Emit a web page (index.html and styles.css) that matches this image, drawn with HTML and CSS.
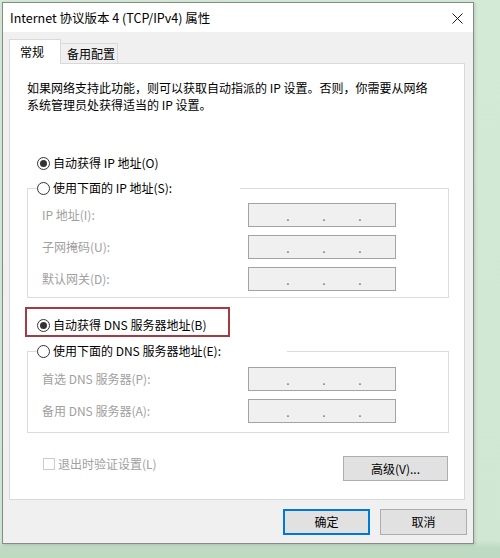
FILE: index.html
```html
<!DOCTYPE html>
<html lang="zh-CN">

<head>
    <meta charset="UTF-8">
    <meta name="viewport" content="width=device-width, initial-scale=1.0">
    <title>Internet 协议版本 4 (TCP/IPv4) 属性</title>
    <link rel="stylesheet" href="styles.css">
</head>

<body>
    <div class="window">
        <div class="titlebar">
            <span class="title">Internet 协议版本 4 (TCP/IPv4) 属性</span>
            <svg class="close" width="11" height="11" viewBox="0 0 11 11">
                <path d="M0.5 0.5 L10.5 10.5 M10.5 0.5 L0.5 10.5" stroke="#1a1a1a" stroke-width="1" fill="none" />
            </svg>
        </div>

        <div class="dialog">
            <div class="tabs">
                <div class="tab active">常规</div>
                <div class="tab">备用配置</div>
            </div>

            <div class="panel">
                <p class="desc">如果网络支持此功能，则可以获取自动指派的 IP 设置。否则，你需要从网络<br>系统管理员处获得适当的 IP 设置。</p>

                <div class="radio first">
                    <svg class="dot" width="13" height="13" viewBox="0 0 13 13">
                        <circle cx="6.5" cy="6.5" r="6" fill="#fff" stroke="#333" />
                        <circle cx="6.5" cy="6.5" r="3.5" fill="#333" />
                    </svg>
                    <span>自动获得 IP 地址(O)</span>
                </div>

                <fieldset class="group">
                    <legend class="radio legend-ip">
                        <svg class="dot" width="13" height="13" viewBox="0 0 13 13">
                            <circle cx="6.5" cy="6.5" r="6" fill="#fff" stroke="#333" />
                        </svg>
                        <span>使用下面的 IP 地址(S):</span>
                    </legend>
                    <div class="rows">
                        <div class="row">
                            <span class="label">IP 地址(I):</span>
                            <div class="ip"><span>.</span><span>.</span><span>.</span></div>
                        </div>
                        <div class="row">
                            <span class="label">子网掩码(U):</span>
                            <div class="ip"><span>.</span><span>.</span><span>.</span></div>
                        </div>
                        <div class="row">
                            <span class="label">默认网关(D):</span>
                            <div class="ip"><span>.</span><span>.</span><span>.</span></div>
                        </div>
                    </div>
                </fieldset>

                <div class="highlight">
                    <div class="radio">
                        <svg class="dot" width="13" height="13" viewBox="0 0 13 13">
                            <circle cx="6.5" cy="6.5" r="6" fill="#fff" stroke="#333" />
                            <circle cx="6.5" cy="6.5" r="3.5" fill="#333" />
                        </svg>
                        <span>自动获得 DNS 服务器地址(B)</span>
                    </div>
                </div>

                <fieldset class="group dns">
                    <legend class="radio legend-dns">
                        <svg class="dot" width="13" height="13" viewBox="0 0 13 13">
                            <circle cx="6.5" cy="6.5" r="6" fill="#fff" stroke="#333" />
                        </svg>
                        <span>使用下面的 DNS 服务器地址(E):</span>
                    </legend>
                    <div class="rows">
                        <div class="row">
                            <span class="label">首选 DNS 服务器(P):</span>
                            <div class="ip"><span>.</span><span>.</span><span>.</span></div>
                        </div>
                        <div class="row">
                            <span class="label">备用 DNS 服务器(A):</span>
                            <div class="ip"><span>.</span><span>.</span><span>.</span></div>
                        </div>
                    </div>
                </fieldset>

                <div class="bottom-row">
                    <div class="check"><span class="box"></span>退出时验证设置(L)</div>
                    <button class="btn advanced">高级(V)...</button>
                </div>
            </div>

            <div class="actions">
                <button class="btn primary">确定</button>
                <button class="btn">取消</button>
            </div>
        </div>
    </div>
</body>

</html>
```

FILE: styles.css
```css
body {
    margin: 0;
    width: 500px;
    height: 558px;
    overflow: hidden;
    background: linear-gradient(to bottom, #d3ead6 0, #d0e8d3 540px, #bedbc2 548px);
    font-family: "Noto Sans CJK SC", "Noto Sans", sans-serif;
    font-size: 12px;
    color: #000;
}

.window {
    box-sizing: border-box;
    width: 472px;
    height: 542px;
    margin: 2px 0 0 2px;
    background-color: #f0f0f0;
    border: 1px solid #8a8a8a;
    box-shadow: 1px 1px 3px rgba(0, 0, 0, 0.15);
    display: flex;
    flex-direction: column;
}

.titlebar {
    height: 29px;
    background-color: #fff;
    display: flex;
    align-items: center;
    justify-content: space-between;
    padding: 0 10px 0 7px;
}

.title {
    font-size: 12.5px;
    line-height: 16px;
    margin-top: 1px;
}

.close {
    display: block;
    margin-top: 1px;
}

.dialog {
    padding: 7px 6px 0 6px;
}

.tabs {
    display: flex;
    align-items: flex-end;
    margin-bottom: -1px;
}

.tab {
    box-sizing: border-box;
    height: 20px;
    line-height: 19px;
    padding: 0 0 0 6px;
    width: 57px;
    white-space: nowrap;
    border-top: 1px solid #d9d9d9;
    border-right: 1px solid #d9d9d9;
    margin-bottom: 1px;
}

.tab.active {
    position: relative;
    z-index: 1;
    width: 52px;
    height: 25px;
    line-height: 24px;
    padding: 0 10px;
    background-color: #fff;
    border-left: 1px solid #d9d9d9;
    margin-bottom: 0;
}

.panel {
    box-sizing: border-box;
    width: 456px;
    background-color: #fff;
    border: 1px solid #d9d9d9;
    padding-bottom: 18px;
}

.desc {
    margin: 15px 0 0 17px;
    line-height: 17px;
}

.radio {
    display: flex;
    align-items: center;
    gap: 3px;
    height: 20px;
    line-height: 20px;
    background-color: #fff;
}

.dot {
    display: block;
    flex: none;
}

.first {
    margin: 40px 0 0 27px;
}

.group {
    box-sizing: border-box;
    width: 422px;
    margin: 5px 0 0 17px;
    padding: 0;
    border: 1px solid #dcdcdc;
    min-width: 0;
}

.group legend {
    padding: 0;
    margin-left: 9px;
}

.legend-ip {
    width: 203px;
}

.legend-dns {
    width: 250px;
}

.rows {
    display: flex;
    flex-direction: column;
    gap: 8px;
    padding: 5px 0 6px 14px;
}

.dns .rows {
    padding: 6px 0 9px 14px;
}

.row {
    display: flex;
    align-items: center;
    height: 24px;
}

.label {
    width: 206px;
    color: #a0a0a0;
    line-height: 16px;
}

.ip {
    box-sizing: border-box;
    width: 148px;
    height: 24px;
    background-color: #f0f0f0;
    border: 1px solid #a3a3a3;
    display: flex;
    align-items: center;
    padding-left: 37px;
    gap: 32px;
    color: #707070;
    line-height: 14px;
}

.ip span {
    width: 4px;
    text-align: center;
    margin-top: 1px;
}

.highlight {
    box-sizing: border-box;
    width: 205px;
    height: 30px;
    margin: 9px 0 0 15px;
    border: 2px solid #a33a44;
    padding: 6px 0 0 10px;
}

.highlight .radio {
    background-color: transparent;
}

.group.dns {
    margin-top: 4px;
}

.bottom-row {
    display: flex;
    justify-content: space-between;
    align-items: flex-start;
    margin: 23px 16px 0 33px;
}

.check {
    display: flex;
    align-items: center;
    gap: 3px;
    height: 14px;
    margin-top: 1px;
    color: #a0a0a0;
    line-height: 14px;
}

.box {
    box-sizing: border-box;
    width: 12px;
    height: 12px;
    border: 1px solid #cccccc;
    background-color: #fff;
}

.btn {
    box-sizing: border-box;
    height: 26px;
    padding: 0;
    background-color: #e1e1e1;
    border: 1px solid #adadad;
    font-family: "Noto Sans CJK SC", "Noto Sans", sans-serif;
    font-size: 12px;
    line-height: 16px;
    color: #000;
}

.advanced {
    width: 105px;
    height: 25px;
}

.actions {
    display: flex;
    justify-content: flex-end;
    gap: 10px;
    margin-top: 9px;
}

.actions .btn {
    width: 87px;
}

.primary {
    border-color: #0078d7;
    box-shadow: inset 0 0 0 1px #0078d7;
}
```
